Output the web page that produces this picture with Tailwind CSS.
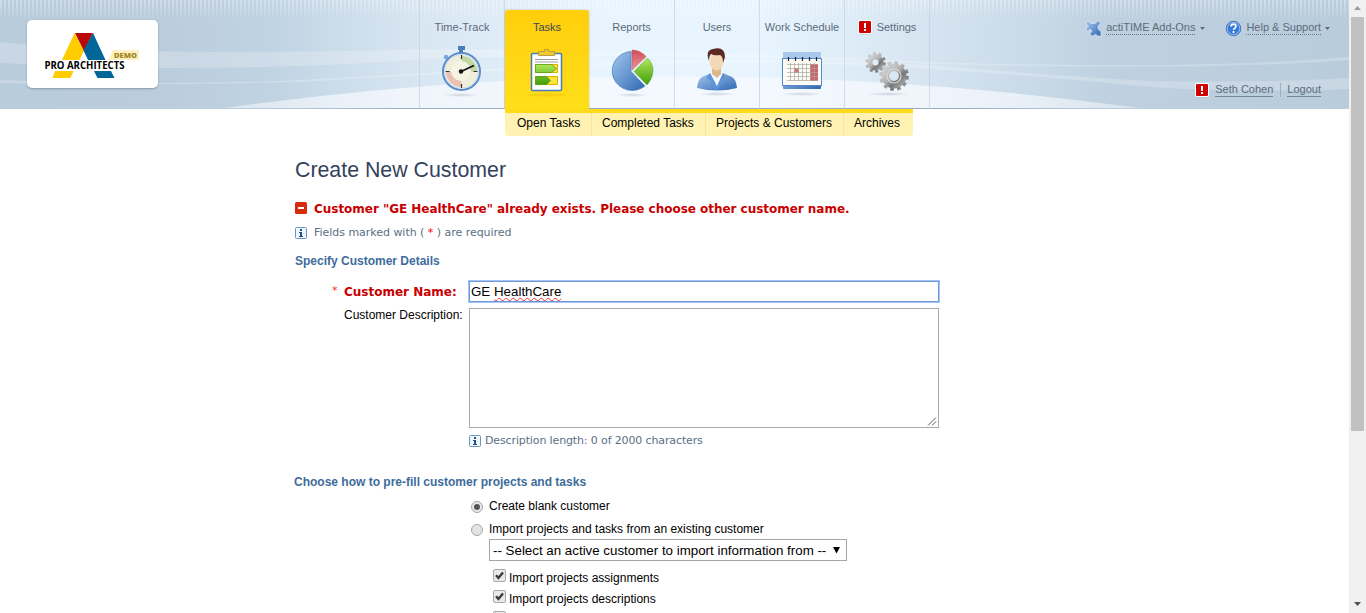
<!DOCTYPE html>
<html lang="en">
<head>
<meta charset="utf-8">
<title>Create New Customer</title>
<script src="https://cdn.jsdelivr.net/npm/@tailwindcss/browser@4"></script>
</head>
<body class="flex h-[613px] w-[1366px] overflow-hidden bg-white font-['Liberation_Sans',Arial,sans-serif] text-[12px] text-black">
<svg class="absolute h-0 w-0" aria-hidden="true">
  <defs>
    <linearGradient id="blue" x1="0" y1="0" x2="1" y2="1"><stop offset="0" stop-color="#a5c8f0"/><stop offset="1" stop-color="#2f68b2"/></linearGradient>
    <linearGradient id="green" x1="0" y1="0" x2="0" y2="1"><stop offset="0" stop-color="#b0e85c"/><stop offset="1" stop-color="#3f9d08"/></linearGradient>
    <linearGradient id="red" x1="0" y1="0" x2="0" y2="1"><stop offset="0" stop-color="#d24c58"/><stop offset="1" stop-color="#e89a9c"/></linearGradient>
    <linearGradient id="metal" x1="0" y1="0" x2="1" y2="1"><stop offset="0" stop-color="#d2d2d2"/><stop offset=".45" stop-color="#b2b2b2"/><stop offset=".7" stop-color="#777"/><stop offset="1" stop-color="#a5a5a5"/></linearGradient>
    <radialGradient id="shade"><stop offset="0" stop-color="#6b7a8a" stop-opacity=".28"/><stop offset="1" stop-color="#6b7a8a" stop-opacity="0"/></radialGradient>
    <symbol id="alert" viewBox="0 0 14 15"><rect x=".5" y="1.500" width="13" height="13" rx="2" fill="#8c98a4" opacity=".5"/><rect width="14" height="14" rx="2" fill="#fff"/><rect x="1" y="1" width="12" height="12" rx="1" fill="#d00000"/><path d="M6 3h2v5H6zM6 9h2v2H6z" fill="#fff"/></symbol>
    <symbol id="info" viewBox="0 0 12 12"><rect x=".5" y=".5" width="11" height="11" rx="1" fill="#eef6fd" stroke="#6d94bb"/><path d="M5 2h2v2H5zM4 5h3v4h1v1H4V9h1V6H4z" fill="#1d5189"/></symbol>
    <symbol id="check" viewBox="0 0 13 13"><rect x=".5" y=".5" width="12" height="12" rx="1.500" fill="#e9e9e9" stroke="#a9a9a9"/><path d="M3 6.300l2.400 2.600L10 3.400" fill="none" stroke="#3c3c3c" stroke-width="2.400"/></symbol>
  </defs>
</svg>

<div class="w-[1349px] shrink-0">
  <header class="relative isolate flex h-[109px]">
    <svg class="absolute inset-0 -z-10" width="1349" height="109">
      <defs>
        <linearGradient id="sky"><stop offset="0" stop-color="#b9ccdc"/><stop offset=".12" stop-color="#bbcddd"/><stop offset=".2" stop-color="#c0d3e3"/><stop offset=".31" stop-color="#d8e6f2"/><stop offset=".45" stop-color="#e8f5ff"/><stop offset=".56" stop-color="#e8f5ff"/><stop offset=".69" stop-color="#d5e4f0"/><stop offset=".82" stop-color="#bfd1e1"/><stop offset="1" stop-color="#b9ccdc"/></linearGradient>
        <linearGradient id="fade" x1="0" y1="0" x2="0" y2="1"><stop offset="0" stop-color="#fff"/><stop offset="1" stop-color="#000"/></linearGradient>
        <pattern id="bars" width="4" height="20" patternUnits="userSpaceOnUse"><rect width="2" height="20" fill="#fff" opacity=".35"/></pattern>
        <mask id="fm"><rect width="1349" height="20" fill="url(#fade)"/></mask>
        <linearGradient id="hill"><stop offset="0" stop-color="#fff" stop-opacity=".45"/><stop offset=".2" stop-color="#f8faff" stop-opacity=".75"/><stop offset=".8" stop-color="#f8faff" stop-opacity=".75"/><stop offset="1" stop-color="#fff" stop-opacity=".4"/></linearGradient>
        <linearGradient id="edge"><stop offset="0" stop-color="#98abc1" stop-opacity="0"/><stop offset=".2" stop-color="#98abc1"/><stop offset=".8" stop-color="#98abc1"/><stop offset="1" stop-color="#98abc1" stop-opacity="0"/></linearGradient>
      </defs>
      <rect width="1349" height="109" fill="url(#sky)"/>
      <rect width="1349" height="20" fill="url(#bars)" mask="url(#fm)"/>
      <path d="M0 42Q90 50 200 52Q330 52 440 49Q700 50 930 62Q1200 70 1349 57V60Q1200 71 930 64Q680 52 440 58Q300 69 160 68Q80 67 0 63Z" fill="#fff" opacity=".22"/>
      <path d="M0 80Q160 86 300 80Q440 72 560 65Q750 54 930 65Q1060 76 1150 81Q1260 83 1349 78V89Q1240 93 1150 87Q1040 76 930 69Q750 58 560 67Q440 74 300 82Q160 86 0 83Z" fill="#fff" opacity=".22"/>
      <path d="M225 108Q675 45 1140 108Z" fill="url(#hill)"/>
      <rect x="225" y="108" width="915" height="1" fill="url(#edge)"/>
    </svg>

    <a class="mt-5 ml-[27px] h-[68px] w-[131px] rounded-[5px] bg-white shadow-[0_1px_2px_rgba(80,100,130,.5)]">
      <svg width="131" height="68" viewBox="27 20 131 68">
        <path d="M74.500 33L62 60h17.500L84 50.500zM55 71h18.500l-3 7H52.500z" fill="#fc0"/><path d="M75 33h18l-9 18z" fill="#b80808"/><path d="M93 33l12.500 27H88l-4.500-9.500zM94 71h17l3.500 7H97.500z" fill="#069"/>
        <path d="M133 50h6v10h-31l5-10z" fill="#fff0c0"/>
        <text x="114" y="58" font-family="Open Sans,sans-serif" font-weight="800" font-size="7.500" fill="#a08520" textLength="23">DEMO</text>
        <text x="44.500" y="69" font-family="Open Sans,sans-serif" font-weight="700" font-size="9.700" textLength="80" lengthAdjust="spacingAndGlyphs">PRO ARCHITECTS</text>
      </svg>
    </a>

    <nav class="ml-[261px] flex text-[11px] leading-[13px] text-[#5c6b7a]">
      <a class="flex w-[86px] flex-col items-center border-x border-[#c2d0e4]/70 pt-[21px]"><span>Time-Track</span>
        <svg class="mt-[10px]" width="50" height="54" viewBox="437 44 50 54"><ellipse cx="461" cy="95" rx="18" ry="2" fill="url(#shade)"/><path d="M458 46h7v4h-2v3h-4v-3h-1z" fill="#477fbd"/><circle cx="446" cy="57" r="2.200" fill="#79a6dc"/><circle cx="461.500" cy="71.500" r="18.500" fill="#f7f6e4" stroke="#5b8ccb" stroke-width="2"/><circle cx="461.500" cy="71.500" r="16.800" fill="#efeedb" stroke="#c6dcf3"/><path d="M461.500 71.500V56a15.500 15.500 0 0 1 15.500 15.500z" fill="#bfd7a0"/><path d="M461.500 71.500V87A15.500 15.500 0 0 1 446 71.500z" fill="#ecc0b2"/><circle cx="461" cy="71" r="10" fill="#f4f3e4"/><path d="M461.500 55v4M461.500 84v4M445.500 71.500h4M473.500 71.500h4" stroke="#333" stroke-width="1.200"/><path d="M461 71.500l13-6" stroke="#111" stroke-width="1.800"/><circle cx="461" cy="71.500" r="2.200" fill="#111"/></svg></a>
      <a class="mt-[10px] flex h-[99px] w-[84px] flex-col items-center rounded-t-[3px] bg-linear-to-b from-[#ffce0c] to-[#ffdf1a] pt-[11px] text-[#3d4650] shadow-[0_0_2px_rgba(120,110,60,.4)]"><span>Tasks</span>
        <svg class="mt-[10px]" width="50" height="54" viewBox="522 44 50 54"><ellipse cx="547" cy="95" rx="20" ry="1.500" fill="#d9a800" opacity=".25"/><rect x="531.500" y="53.500" width="30" height="37" rx="1" fill="#fff" stroke="#4a7cb8" stroke-width="1.500"/><path d="M538.500 55.500v-4h6v-2h4v2h6v4z" fill="#efc938" stroke="#b3992b" stroke-width=".9"/><path d="M535 59.500h23M535 62h23" stroke="#888" stroke-width=".8"/><path d="M535.500 64.500h22v8h-22zM535.500 76.500h22v8h-22z" fill="#ffe23a" stroke="#d5b400"/><path d="M535.500 64.500h16l5 4-5 4h-16zM535.500 76.500h11l4 4-4 4h-11z" fill="url(#green)" stroke="#4d9815" stroke-width=".7"/></svg></a>
      <a class="flex w-[86px] flex-col items-center border-r border-[#c2d0e4]/70 pt-[21px]"><span>Reports</span>
        <svg class="mt-[10px]" width="50" height="54" viewBox="607 44 50 54"><ellipse cx="632" cy="95" rx="16" ry="2" fill="url(#shade)"/><path d="M631 71.500l14 14.500A20 19.500 0 1 1 631 51.500z" fill="url(#blue)" stroke="#4b80bf" stroke-width=".8"/><path d="M632 70V50a20 20 0 0 1 14 6.500z" fill="url(#red)" stroke="#c4505c" stroke-width=".6"/><path d="M634 71.500L647.500 58q6 6 5.500 13.500T647 85z" fill="url(#green)" stroke="#68aa31" stroke-width=".6"/></svg></a>
      <a class="flex w-[85px] flex-col items-center border-r border-[#c2d0e4]/70 pt-[21px]"><span>Users</span>
        <svg class="mt-[10px]" width="50" height="54" viewBox="692 44 50 54"><ellipse cx="717" cy="94" rx="18" ry="2" fill="url(#shade)"/><path d="M697 88q1-9 5-11l9-4h12l9 4q4 2 5 11-20 5-40 0z" fill="url(#blue)"/><path d="M710 73l7 15 6-15q-7-3-13 0z" fill="#f4f9ff"/><path d="M710 73l-4 5 6 3-1 3 6 6 6-8-1-2 4-3-3-4-6 13z" fill="#5c95d8"/><path d="M712 68h9v6l-4 4-5-4z" fill="#dcb78d"/><ellipse cx="716.500" cy="61.500" rx="7" ry="9" fill="#f2d8b5"/><path d="M709 61q-4-11 4-12 12-3 12 8l-2 6q0-7-3-8-6 1-9-1-2 2-2 7z" fill="#592922"/></svg></a>
      <a class="flex w-[85px] flex-col items-center border-r border-[#c2d0e4]/70 pt-[21px]"><span class="whitespace-nowrap">Work Schedule</span>
        <svg class="mt-[10px]" width="50" height="54" viewBox="777 44 50 54"><ellipse cx="802" cy="94" rx="21" ry="2" fill="url(#shade)"/><rect x="783" y="52" width="38" height="37" rx="1" fill="url(#blue)"/><rect x="783" y="52" width="38" height="8" fill="#a9c8ec"/><rect x="782.500" y="58.500" width="39" height="27" fill="#fcfbf5" stroke="#5389c8"/><path d="M810 64h8v17h-8z" fill="#ca666c"/><path d="M794 68h5v5h-5z" fill="#d67378"/><path d="M787 64.500h31M787 68.500h31M787 72.500h31M787 76.500h31M787 80.500h31M790.500 63v18M794.500 63v18M798.500 63v18M802.500 63v18M806.500 63v18M810.500 63v18M814.500 63v18" stroke="#aaa59c" stroke-width=".7"/><path d="M788.500 57v4M795.500 57v4M802.500 57v4M809.500 57v4M816.500 57v4" stroke="#222" stroke-width="1.200"/></svg></a>
      <a class="flex w-[85px] flex-col items-center border-r border-[#c2d0e4]/70 pt-[20px]"><span class="flex h-[15px] items-center gap-[5px]"><svg width="14" height="15"><use href="#alert"/></svg>Settings</span>
        <svg class="mt-[9px]" width="50" height="54" viewBox="862 44 50 54"><ellipse cx="888" cy="94" rx="22" ry="2" fill="url(#shade)"/><g fill="none" stroke="url(#metal)"><circle cx="875.500" cy="62.500" r="5.600" stroke-width="5.200"/><circle cx="875.500" cy="62.500" r="9" stroke-width="2.600" stroke-dasharray="3 2.655"/><circle cx="894" cy="76" r="8.700" stroke-width="7.600"/><circle cx="894" cy="76" r="13.400" stroke-width="2.900" stroke-dasharray="3.700 3.316"/></g><circle cx="894" cy="76" r="7" fill="none" stroke="#d8d8d8" stroke-width="1.200"/></svg></a>
    </nav>

    <div class="ml-auto flex flex-col items-end pt-[20px] text-[11px] leading-[13px] text-[#5c6b7a]">
      <div class="mr-[19px] flex h-4 items-center">
        <svg width="17" height="17" viewBox="0 0 17 17"><path d="M1 3q0-2 2-2 1.500 0 2 2 3 1 6 0 .500-2 2.500-2Q16 1.500 15 4q-1.500 1-2 2 0 3 1 4 2 0 2 2v4h-3.500q-1-2-2.500-1.500-1 1.500-3 1.500-2.500-.5-2-2.500.500-1.500 2-2-.500-2.500-3-2Q3 11.500 1.500 11 .500 9 2 7.500L3.500 6Q1 5 1 3z" fill="url(#blue)" stroke="#dceafa" stroke-width=".7"/></svg>
        <span class="mr-px ml-1 border-b border-dotted border-[#64788c]">actiTIME Add-Ons</span>
        <svg class="ml-1" width="5" height="3"><path d="M0 0h5L2.500 3z" fill="#5c6b7a"/></svg>
        <svg class="ml-[20px]" width="17" height="17"><circle cx="8.500" cy="8.500" r="7.200" fill="#397bd9" stroke="#3b6db5"/><circle cx="8.500" cy="8.500" r="6.300" fill="none" stroke="#b7d3f6" stroke-width=".8"/><path d="M6 6.500q.2-2.300 2.600-2.300 2.300.1 2.300 2 0 1.300-1.300 2-.9.500-1 1.700M8.500 11v2" fill="none" stroke="#fff" stroke-width="1.700"/></svg>
        <span class="ml-1 border-b border-dotted border-[#64788c]">Help &amp; Support</span>
        <svg class="ml-1" width="5" height="3"><path d="M0 0h5L2.500 3z" fill="#5c6b7a"/></svg>
      </div>
      <div class="mt-[46px] mr-[28px] flex h-4 items-center">
        <svg width="14" height="15"><use href="#alert"/></svg>
        <span class="mr-px ml-[6px] border-b border-[#74879a]">Seth Cohen</span>
        <span class="mx-[6px] h-[14px] w-px bg-[#a3afbb]"></span>
        <span class="border-b border-[#74879a]">Logout</span>
      </div>
    </div>
  </header>

  <div class="relative ml-[505px] flex h-[27px] w-[408px] rounded-b-[3px] border-t-4 border-[#fddb1a] bg-[#fff2b2] leading-[20px]">
    <a class="w-[87px] border-r border-[#f7e59a] pl-3 whitespace-nowrap">Open Tasks</a>
    <a class="w-[114px] border-r border-[#f7e59a] pl-[10px] whitespace-nowrap">Completed Tasks</a>
    <a class="w-[138px] border-r border-[#f7e59a] pl-[10px] whitespace-nowrap">Projects &amp; Customers</a>
    <a class="pl-[10px]">Archives</a>
  </div>

  <main class="ml-[295px] w-[645px] pt-5">
    <h1 class="h-7 text-[21.33px] leading-7 text-[#33435c]">Create New Customer</h1>
    <p class="mt-[14px] flex h-5 items-center gap-[7px] font-['DejaVu_Sans',Verdana,sans-serif] text-[12px] font-bold tracking-[-0.03px] whitespace-nowrap text-[#c80000]">
      <svg width="12" height="12"><rect width="12" height="12" rx="1.500" fill="#d92b0d"/><path d="M3 5h6v2H3z" fill="#fff"/></svg><span class="pt-px">Customer "GE HealthCare" already exists. Please choose other customer name.</span></p>
    <p class="mt-[5px] flex h-5 items-center gap-[7px] font-['DejaVu_Sans',Verdana,sans-serif] text-[11px] tracking-[-0.03px] text-[#5a6f85]">
      <svg width="12" height="12"><use href="#info"/></svg><span class="pt-px">Fields marked with ( <span class="text-[#f00000]">*</span> ) are required</span></p>
    <h2 class="mt-2 h-5 font-bold leading-5 text-[#3d6c9c]">Specify Customer Details</h2>

    <div class="mt-[9px] flex h-[23px] items-center">
      <label class="flex w-[174px] shrink-0 items-center whitespace-nowrap"><span class="ml-[37px] w-[12px] font-['DejaVu_Sans',sans-serif] text-[11px] text-[#f03030]">*</span><span class="font-['DejaVu_Sans',Verdana,sans-serif] text-[12px] font-bold text-[#c80000]">Customer Name:</span></label>
      <div class="flex h-[21px] w-[470px] items-center border border-[#7097d8] pl-px text-[13.33px] leading-[18px] ring-1 ring-[#a6c5f7]"><span>GE <span class="underline decoration-[#f03030] decoration-wavy decoration-[1px] underline-offset-1">HealthCare</span></span></div>
    </div>
    <div class="mt-[5px] flex h-[120px]">
      <label class="w-[174px] pl-[49px] leading-[14px] whitespace-nowrap">Customer Description:</label>
      <div class="flex h-[120px] w-[470px] items-end justify-end border border-[#a9a9a9]">
        <svg width="11" height="11"><path d="M1 9.500L9 1.500M5 9.500l4-4" stroke="#444" stroke-width=".9"/></svg>
      </div>
    </div>
    <p class="mt-[3px] ml-[174px] flex h-5 items-center gap-1 font-['DejaVu_Sans',Verdana,sans-serif] text-[11px] tracking-[-0.13px] text-[#5a6f85]"><svg width="12" height="12"><use href="#info"/></svg><span class="pt-px">Description length: 0 of 2000 characters</span></p>

    <h2 class="mt-[21px] -ml-px h-5 font-bold leading-5 text-[#3d6c9c]">Choose how to pre-fill customer projects and tasks</h2>
    <div class="ml-[176px] leading-5">
      <label class="mt-1 flex h-5 gap-[6px]"><svg class="mt-[5px]" width="12" height="12"><circle cx="6" cy="6" r="5.500" fill="#e8e8e8" stroke="#a6a6a6"/><circle cx="6" cy="6" r="3" fill="#555"/></svg><span>Create blank customer</span></label>
      <label class="mt-[3px] flex h-5 gap-[6px]"><svg class="mt-[5px]" width="12" height="12"><circle cx="6" cy="6" r="5.500" fill="#e4e4e4" stroke="#a6a6a6"/></svg><span>Import projects and tasks from an existing customer</span></label>
      <div class="ml-[18px] flex h-[22px] w-[358px] items-center justify-between border border-[#a6a6a6] pr-[6px] pl-[3px] text-[13.33px] whitespace-nowrap"><span class="pt-[2px]">-- Select an active customer to import information from --</span><svg width="7" height="7"><path d="M0 0h7L3.500 6.500z"/></svg></div>
      <label class="mt-[6px] ml-[22px] flex h-5 gap-[3px]"><svg class="mt-[2px]" width="13" height="13"><use href="#check"/></svg><span class="pt-px">Import projects assignments</span></label>
      <label class="mt-px ml-[22px] flex h-5 gap-[3px]"><svg class="mt-[2px]" width="13" height="13"><use href="#check"/></svg><span class="pt-px">Import projects descriptions</span></label>
      <label class="mt-px ml-[22px] flex h-5"><svg class="mt-[2px]" width="13" height="13"><use href="#check"/></svg></label>
    </div>
  </main>
</div>

<div class="flex h-[613px] w-[17px] shrink-0 flex-col items-center bg-[#f0f0f0]">
  <svg class="mt-[6px]" width="7" height="4"><path d="M0 4h7L3.500 0z" fill="#9c9c9c"/></svg>
  <div class="mt-[7px] h-[414px] w-[13px] bg-[#c1c1c1]"></div>
  <svg class="mt-auto mb-[7px]" width="7" height="4"><path d="M0 0h7L3.500 4z" fill="#4f4f4f"/></svg>
</div>
</body>
</html>
